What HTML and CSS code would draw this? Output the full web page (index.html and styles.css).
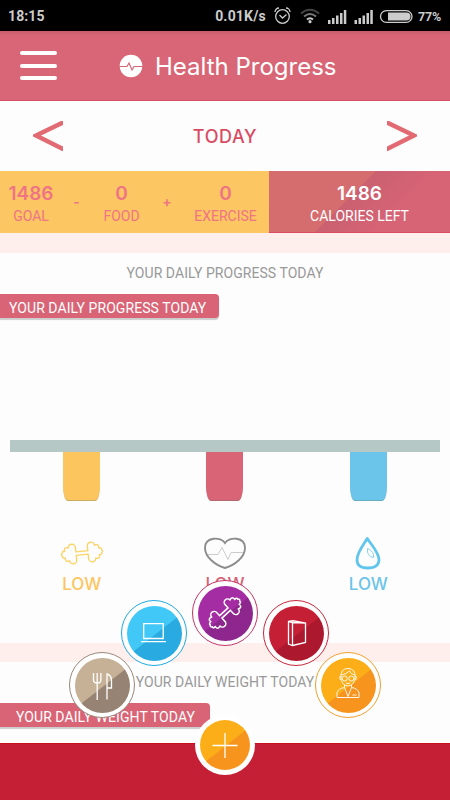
FILE: index.html
```html
<!DOCTYPE html>
<html lang="en">
<head>
    <meta charset="UTF-8">
    <meta name="viewport" content="width=device-width, initial-scale=1.0">
    <title>Health Progress</title>
    <link rel="stylesheet" href="styles.css">
</head>
<body>
    <!-- shared dumbbell outline -->
    <svg class="defs" width="0" height="0">
        <symbol id="dumbbell" viewBox="-22 -12 44 24">
            <path d="M-6-1.8H6V-6a3.600 3.600 0 0 1 7.200-.5q4.500-1.500 4 3q3 0 2.500 2q2 1.500 0 3q.5 2-2.500 2q.5 4.500-4 3a3.600 3.600 0 0 1-7.200-.5V1.800H-6V6a3.600 3.600 0 0 1-7.200.5q-4.500 1.500-4-3q-3 0-2.500-2q-2-1.500 0-3q-.5-2 2.500-2q-.5-4.500 4-3a3.600 3.600 0 0 1 7.200.5z"/>
        </symbol>
    </svg>

    <div class="status-bar">
        <span class="clock">18:15</span>
        <span class="speed">0.01K/s</span>
        <svg class="status-icons" width="146" height="20" viewBox="0 0 146 20">
            <g fill="none" stroke="#ccc" stroke-width="1.3">
                <circle cx="10.5" cy="10.5" r="6.8"/>
                <path d="M7.5 9l3 3 4-3.5M3 6a4 4 0 0 1 4-4M14 2a4 4 0 0 1 4 4"/>
            </g>
            <g fill="none" stroke-width="2">
                <path stroke="#444" d="M29 7.5q9-7.5 18 0"/>
                <path stroke="#777" d="M32 10.5q6-5 12 0"/>
                <path stroke="#ccc" d="M35 13.5q3-2.5 6 0"/>
            </g>
            <circle cx="38" cy="15.7" r="1.6" fill="#ccc"/>
            <path fill="#ccc" d="M56 14h2.500v4H56zM60 12h2.500v6H60zM64 9.500h2.500V18H64zM68 7h2.500v11H68zM71.800 4h2.500v14h-2.500zM82.500 14H85v4h-2.500zM86.500 12H89v6h-2.500zM90.500 9.500H93V18h-2.500zM94.500 7H97v11h-2.500zM98.300 4h2.500v14h-2.500z"/>
            <rect x="108.500" y="4.700" width="31.500" height="11.600" rx="5.800" fill="none" stroke="#ccc" stroke-width="1.3"/>
            <path fill="#ccc" d="M116 6.500h18.500a4 4 0 0 1 0 8H116z"/>
        </svg>
        <span class="battery">77%</span>
    </div>

    <header class="header">
        <div class="menu">
            <span></span>
            <span></span>
            <span></span>
        </div>
        <svg class="header-icon" width="24" height="24" viewBox="0 0 24 24">
            <circle cx="12" cy="12" r="11.3" fill="#fff"/>
            <path d="M0 12.500h8l2-3.500 3 7 2-3.500h9" fill="none" stroke="#d96575" stroke-width="1.2"/>
        </svg>
        <h1>Health Progress</h1>
    </header>

    <div class="day">
        <svg width="30" height="30" viewBox="0 0 30 30"><path d="M31 1L3 14.500 31 28.500"/></svg>
        <span>TODAY</span>
        <svg width="30" height="30" viewBox="0 0 30 30"><path d="M-1 1L27 14.500-1 28.500"/></svg>
    </div>

    <div class="stats">
        <div class="stat"><b>1486</b><span>GOAL</span></div>
        <div class="sign">-</div>
        <div class="stat"><b>0</b><span>FOOD</span></div>
        <div class="sign">+</div>
        <div class="stat"><b>0</b><span>EXERCISE</span></div>
        <div class="stat left"><b>1486</b><span>CALORIES LEFT</span></div>
    </div>

    <section class="card progress">
        <p class="caption">YOUR DAILY PROGRESS TODAY</p>
        <h2 class="ribbon">YOUR DAILY PROGRESS TODAY</h2>
        <div class="chart">
            <div class="col yellow">
                <div class="bar"></div>
                <svg width="44" height="36" viewBox="0 0 44 36"><use href="#dumbbell" x="0" y="6" width="44" height="24" transform="rotate(-6 22 18)" fill="none" stroke="#fbd469" stroke-width="1.4"/></svg>
                <span>LOW</span>
            </div>
            <div class="col red">
                <div class="bar"></div>
                <svg width="44" height="36" viewBox="0 0 44 36">
                    <path d="M22 8C18 1.500 2 1.500 2 13c0 9 10 17 20 20 10-3 20-11 20-20C42 1.500 26 1.500 22 8z" fill="none" stroke="#8c8c8c" stroke-width="1.9"/>
                    <path d="M5 19.500h10l4-7 6 12 3-7h12" fill="none" stroke="#ccc" stroke-width="1"/>
                </svg>
                <span>LOW</span>
            </div>
            <div class="col blue">
                <div class="bar"></div>
                <svg width="44" height="36" viewBox="0 0 44 36">
                    <path d="M21.300 3.500C18 9 11 17 11 25q0 8 10.800 8T33 25C33 17 24.500 9 21.300 3.500z" fill="none" stroke="#62c5ec" stroke-width="2.8" stroke-linejoin="round"/>
                    <path d="M21.500 13.500q-1 8 6 9 1-6-6-9z" fill="none" stroke="#8ad4f0" stroke-width="1"/>
                </svg>
                <span>LOW</span>
            </div>
        </div>
    </section>

    <section class="card weight">
        <p class="caption">YOUR DAILY WEIGHT TODAY</p>
        <h2 class="ribbon">YOUR DAILY WEIGHT TODAY</h2>
    </section>

    <footer class="footer"></footer>

    <!-- round menu fanned out over the page -->
    <nav class="fan">
        <a class="item food">
            <svg viewBox="0 0 66 66"><path d="M24.500 21v7q0 3 3.700 3t3.700-3v-7M28.200 21v27M38 47.500V22q4.500 1 4.500 7v7H38"/></svg>
        </a>
        <a class="item laptop">
            <svg viewBox="0 0 66 66"><path d="M22.700 23.700h19.500v14.800H22.700zM20 41.700h25"/></svg>
        </a>
        <a class="item gym">
            <svg viewBox="0 0 66 66"><use href="#dumbbell" x="12" y="21.500" width="42" height="23" transform="rotate(-43 33 33)"/></svg>
        </a>
        <a class="item book">
            <svg viewBox="0 0 66 66"><path d="M25.500 21.500l4 1v23l-4-1.500zM25.500 21.500l4.500-.8 12.500 2.300v19.500l-13 3M29.500 22.500l13 .5"/></svg>
        </a>
        <a class="item coach">
            <svg viewBox="0 0 66 66" class="thin"><path d="M26 25q-.5-8.500 7-8.500T40 25q0 8-7 9-7-1-7-9zM26.500 23q5-1 8-4 1 3 5 4M22 45.500v-4.500q1-4.500 7.500-5.500l3.500 9 3.500-9q6.500 1 7.500 5.500v4.500zM29.500 33v2.500M36.500 33v2.500M37.500 43h4M31 31q2 1 4 0M26 24q-2.500 0-.5 4M40 24q2.500 0 .5 4"/><circle cx="29.700" cy="26.500" r="2.500"/><circle cx="36.300" cy="26.500" r="2.500"/></svg>
        </a>
        <a class="item plus">
            <svg viewBox="0 0 60 60"><path d="M30 18v25M17.500 30.500h25"/></svg>
        </a>
    </nav>
</body>
</html>
```

FILE: styles.css
```css
* {
    box-sizing: border-box;
}
body {
    margin: 0;
    width: 450px;
    height: 800px;
    overflow: hidden;
    position: relative;
    display: flex;
    flex-direction: column;
    font-family: Roboto, sans-serif;
    background-color: #feefec;
}
.defs {
    position: absolute;
}

/* phone status bar */
.status-bar {
    height: 31px;
    display: flex;
    align-items: center;
    padding: 1px 8px 0;
    background-color: #000;
    color: #ccc;
    font-size: 14px;
    font-weight: 700;
}
.clock {
    letter-spacing: 0.1px;
}
.speed {
    margin-left: auto;
    letter-spacing: 0.2px;
}
.status-icons {
    margin-left: 6px;
}
.battery {
    width: 24px;
    font-size: 12.5px;
    letter-spacing: -0.2px;
}

.header {
    height: 70px;
    display: flex;
    align-items: center;
    padding-left: 20px;
    background: linear-gradient(#c85d6b, #d86676 5px);
    border-bottom: 1px solid #d84e65;
}
.menu {
    width: 37px;
    display: flex;
    flex-direction: column;
    gap: 8.5px;
}
.menu span {
    height: 4px;
    border-radius: 2px;
    background-color: #fff;
}
.header-icon {
    margin-left: 62px;
}
h1 {
    margin: 2px 0 0 12px;
    color: #fff;
    font-family: Inter, sans-serif;
    font-size: 24px;
    font-weight: 400;
    white-space: nowrap;
}

/* day switcher */
.day {
    height: 70px;
    display: flex;
    align-items: center;
    justify-content: space-between;
    padding: 0 33px;
    background-color: #fdfdfd;
    color: #d94c64;
    font-family: Inter, sans-serif;
    font-size: 18px;
    font-weight: 500;
    letter-spacing: 0.6px;
}
.day svg {
    fill: none;
    stroke: #e26b73;
    stroke-width: 4.5;
}

.stats {
    height: 62px;
    display: grid;
    grid-template-columns: 62px 29px 61px 30px 87px 1fr;
    background-color: #fcc662;
    color: #ef7485;
    text-align: center;
}
.stat {
    display: flex;
    flex-direction: column;
    align-items: center;
    padding-top: 11px;
    font-size: 14px;
    line-height: 20px;
    white-space: nowrap;
}
.stat b {
    font-family: Inter, sans-serif;
    font-size: 19px;
    font-weight: 600;
    line-height: 24px;
}
.sign {
    padding-top: 22px;
    font-family: Inter, sans-serif;
    font-size: 14px;
    font-weight: 600;
}
.left {
    color: #fff;
    background: linear-gradient(135deg, #d56d6f 44%, #ca6070 44.5%, #d66475 70%);
    border-bottom: 1px solid #d84e65;
}

.card {
    background-color: #fdfdfd;
}
.caption {
    margin: 0;
    padding-top: 12px;
    color: #999;
    font-size: 14px;
    line-height: 17px;
    text-align: center;
    letter-spacing: 0.05px;
}
.ribbon {
    margin: 12px 0 0;
    width: 219px;
    height: 24px;
    padding-left: 9px;
    border-radius: 0 4px 4px 0;
    background-color: #d86476;
    box-shadow: 0 2px 1px #ccc;
    color: #fff;
    font-size: 14px;
    font-weight: 400;
    line-height: 28px;
    letter-spacing: 0.07px;
}
.progress {
    margin-top: 20px;
    height: 390px;
}
.weight {
    margin-top: 19px;
    height: 81px;
}
.weight .ribbon {
    width: 210px;
    padding-left: 16px;
}

/* three bars hanging from the grey line */
.chart {
    margin: 122px 10px 0;
    border-top: 12px solid #b5c8c5;
    display: grid;
    grid-template-columns: repeat(3, 1fr);
}
.col {
    display: flex;
    flex-direction: column;
    align-items: center;
    font-family: Inter, sans-serif;
    font-size: 17px;
    font-weight: 500;
    line-height: 20px;
}
.col svg {
    margin: 34px 0 3px;
}
.bar {
    width: 37px;
    height: 49px;
    border-radius: 0 0 5px 5px / 0 0 14px 14px;
    background-color: currentColor;
    border-bottom: 1px solid rgba(90, 120, 100, 0.3);
}
.yellow { color: #fcc55e; }
.red { color: #d86475; }
.blue { color: #6bc4ea; }

.footer {
    flex: 1;
    border-top: 1px solid #c80f20;
    background-color: #c41f35;
}

/* fan menu */
.item {
    position: absolute;
    width: 66px;
    height: 66px;
    padding: 4.5px;
    border: 1px solid;
    border-radius: 50%;
    background-color: #fff;
}
.item::before {
    content: "";
    display: block;
    height: 100%;
    border-radius: 50%;
    background: linear-gradient(142deg, var(--light) 51%, var(--dark) 52%);
}
.item svg {
    position: absolute;
    inset: -1px;
    fill: none;
    stroke: #fff;
    stroke-width: 1.3;
}
.item svg.thin {
    stroke-width: 0.9;
}
.food { left: 69px; top: 652px; color: #99887a; --light: #c6b197; --dark: #978373; }
.laptop { left: 121px; top: 600px; color: #1fa8df; --light: #42c8f6; --dark: #29abe2; }
.gym { left: 192px; top: 580px; color: #c23465; --light: #a42da3; --dark: #8d268d; }
.gym svg { stroke-width: 1.6; }
.book { left: 263px; top: 600px; color: #c8253b; --light: #c51f35; --dark: #ac182e; }
.coach { left: 315px; top: 652px; color: #f0a030; --light: #fbae17; --dark: #f7941e; }
.plus {
    left: 195px;
    top: 715px;
    width: 60px;
    height: 60px;
    padding: 5px;
    border: 0;
    --light: #fbae17;
    --dark: #f7941e;
}
.plus svg {
    inset: 0;
}
```
